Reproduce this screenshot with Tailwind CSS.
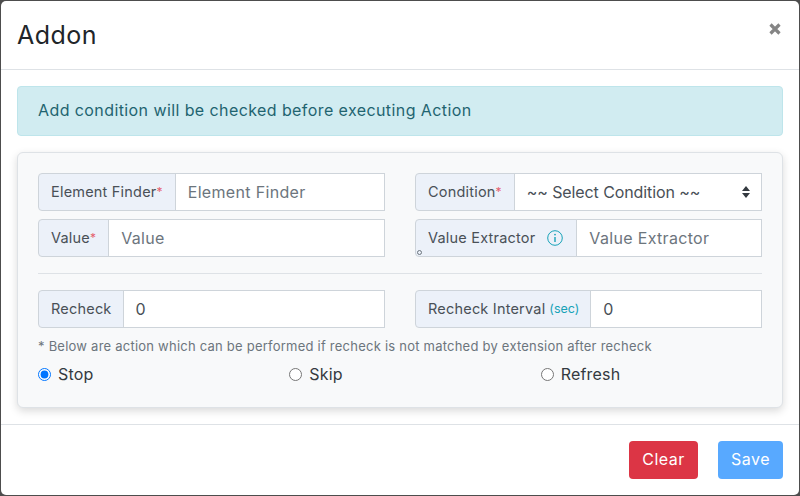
<!DOCTYPE html>
<html lang="en">
<head>
    <meta charset="UTF-8">
    <title>Addon</title>
    <script src="https://cdn.jsdelivr.net/npm/@tailwindcss/browser@4"></script>
</head>
<body class="w-[800px] h-[496px] overflow-hidden bg-[#4d4d4d] font-['Inter',sans-serif] text-[#212529]">

<div class="ml-px mt-px w-[798px] h-[494px] bg-white rounded-[5px] flex flex-col">
    <header class="h-[69px] shrink-0 border-b border-[#dee2e6] px-[17px] flex justify-between">
        <h1 class="text-[25px] leading-[28px] mt-5 -ml-px font-normal tracking-[0.5px] text-[#212529]">Addon</h1>
        <svg class="w-[12px] h-[12px] mt-[22px] mr-px text-[#858585]" viewBox="0 0 12 12" fill="none" stroke="currentColor" stroke-width="3.2"><path d="M1.5 1.5l9 9M10.5 1.5l-9 9"/></svg>
    </header>

    <main class="flex-1 px-4 pt-4">
        <div class="h-[50px] bg-[#d1ecf1] border border-[#bee5eb] rounded-[4px] pl-5 pb-[2px] flex items-center text-[16px] tracking-[0.41px] text-[#1f6470]">Add condition will be checked before executing Action</div>

        <div class="mt-4 h-[256px] bg-[#f8f9fa] border border-[#dee2e6] rounded-[6px] shadow-[0_3px_8px_rgba(0,0,0,0.15)] pt-5 px-5">
            <div class="grid grid-cols-2 gap-x-[30px] gap-y-2">
                <div class="flex h-[38px]">
                    <label class="px-3 pb-px flex items-center bg-[#ecf1f9] border border-[#ced4da] rounded-l-[4px] text-[14.5px] tracking-[0.2px] text-[#495057] whitespace-nowrap">Element Finder<span class="text-[12px] text-[#e4606d]">*</span></label>
                    <input type="text" placeholder="Element Finder" class="flex-1 min-w-0 -ml-px pl-3 bg-white border border-[#ced4da] text-[16px] tracking-[0.33px] placeholder:text-[#6c757d] outline-none">
                </div>
                <div class="flex h-[38px]">
                    <label class="px-3 pb-px flex items-center bg-[#ecf1f9] border border-[#ced4da] rounded-l-[4px] text-[14.5px] tracking-[0.2px] text-[#495057] whitespace-nowrap">Condition<span class="text-[12px] text-[#e4606d]">*</span></label>
                    <div class="relative flex-1 min-w-0 -ml-px">
                        <select class="appearance-none w-full h-full pl-3 pb-px bg-white border border-[#ced4da] text-[16px] tracking-[-0.1px] text-[#495057] outline-none">
                            <option>~~ Select Condition ~~</option>
                        </select>
                        <svg class="absolute right-[12px] top-[13px] w-2 h-3 text-[#343a40]" viewBox="0 0 8 12" fill="currentColor"><path d="M4 0l4 5H0zM4 12L0 7h8z"/></svg>
                    </div>
                </div>
                <div class="flex h-[38px]">
                    <label class="px-3 pb-px flex items-center bg-[#ecf1f9] border border-[#ced4da] rounded-l-[4px] text-[14.5px] tracking-[0.2px] text-[#495057] whitespace-nowrap">Value<span class="text-[12px] text-[#e4606d]">*</span></label>
                    <input type="text" placeholder="Value" class="flex-1 min-w-0 -ml-px pl-3 bg-white border border-[#ced4da] text-[16px] tracking-[0.33px] placeholder:text-[#6c757d] outline-none">
                </div>
                <div class="flex h-[38px]">
                    <label class="relative pl-3 pr-[13px] pb-px flex items-center bg-[#ecf1f9] border border-[#ced4da] rounded-l-[4px] text-[14.5px] tracking-[0.2px] text-[#495057] whitespace-nowrap">Value Extractor
                        <svg class="ml-3 w-4 h-4 text-[#17a2b8]" viewBox="0 0 16 16" fill="none" stroke="currentColor"><circle cx="8" cy="8" r="7.3"/><path d="M8 7v5" stroke-width="1.4"/><circle cx="8" cy="4.6" r="0.9" fill="currentColor" stroke="none"/></svg>
                        <span class="absolute left-[1px] bottom-[1px] w-[5px] h-[5px] rounded-full border border-[#6c757d]"></span>
                    </label>
                    <input type="text" placeholder="Value Extractor" class="flex-1 min-w-0 -ml-px pl-3 bg-white border border-[#ced4da] text-[16px] tracking-[0.33px] placeholder:text-[#6c757d] outline-none">
                </div>
            </div>

            <hr class="mt-4 mb-4 border-[#dee2e6]">

            <div class="grid grid-cols-2 gap-x-[30px]">
                <div class="flex h-[38px]">
                    <label class="pl-3 pr-[11px] pb-px flex items-center bg-[#ecf1f9] border border-[#ced4da] rounded-l-[4px] text-[14.5px] tracking-[0.2px] text-[#495057] whitespace-nowrap">Recheck</label>
                    <input type="text" value="0" class="flex-1 min-w-0 -ml-px pl-3 bg-white border border-[#ced4da] text-[16px] text-[#495057] outline-none">
                </div>
                <div class="flex h-[38px]">
                    <label class="pl-3 pr-[11px] pb-px flex items-center bg-[#ecf1f9] border border-[#ced4da] rounded-l-[4px] text-[14.5px] tracking-[0.2px] text-[#495057] whitespace-nowrap">Recheck Interval<span class="ml-1 pt-px text-[12.5px] tracking-normal text-[#17a2b8]">(sec)</span></label>
                    <input type="text" value="0" class="flex-1 min-w-0 -ml-px pl-3 bg-white border border-[#ced4da] text-[16px] text-[#495057] outline-none">
                </div>
            </div>

            <p class="mt-[10px] text-[13px] leading-4 tracking-[0.23px] text-[#6c757d]">* Below are action which can be performed if recheck is not matched by extension after recheck</p>

            <div class="mt-[10px] -mr-[30px] grid grid-cols-3 text-[16px] leading-5 tracking-[0.2px] text-[#343a40]">
                <label class="flex items-center gap-[7px]"><input type="radio" name="onFail" checked class="m-0">Stop</label>
                <label class="flex items-center gap-[7px]"><input type="radio" name="onFail" class="m-0">Skip</label>
                <label class="flex items-center gap-[7px]"><input type="radio" name="onFail" class="m-0">Refresh</label>
            </div>
        </div>
    </main>

    <footer class="h-[71px] shrink-0 border-t border-[#dee2e6] px-4 pt-4 flex justify-end gap-5">
        <button class="w-[69px] h-[38px] pb-[3px] rounded-[4px] bg-[#dc3545] text-white text-[16px] tracking-[0.5px]">Clear</button>
        <button class="w-[65px] h-[38px] pb-[3px] rounded-[4px] bg-[#58a9ff] text-white text-[16px] tracking-[0.5px]">Save</button>
    </footer>
</div>

</body>
</html>
